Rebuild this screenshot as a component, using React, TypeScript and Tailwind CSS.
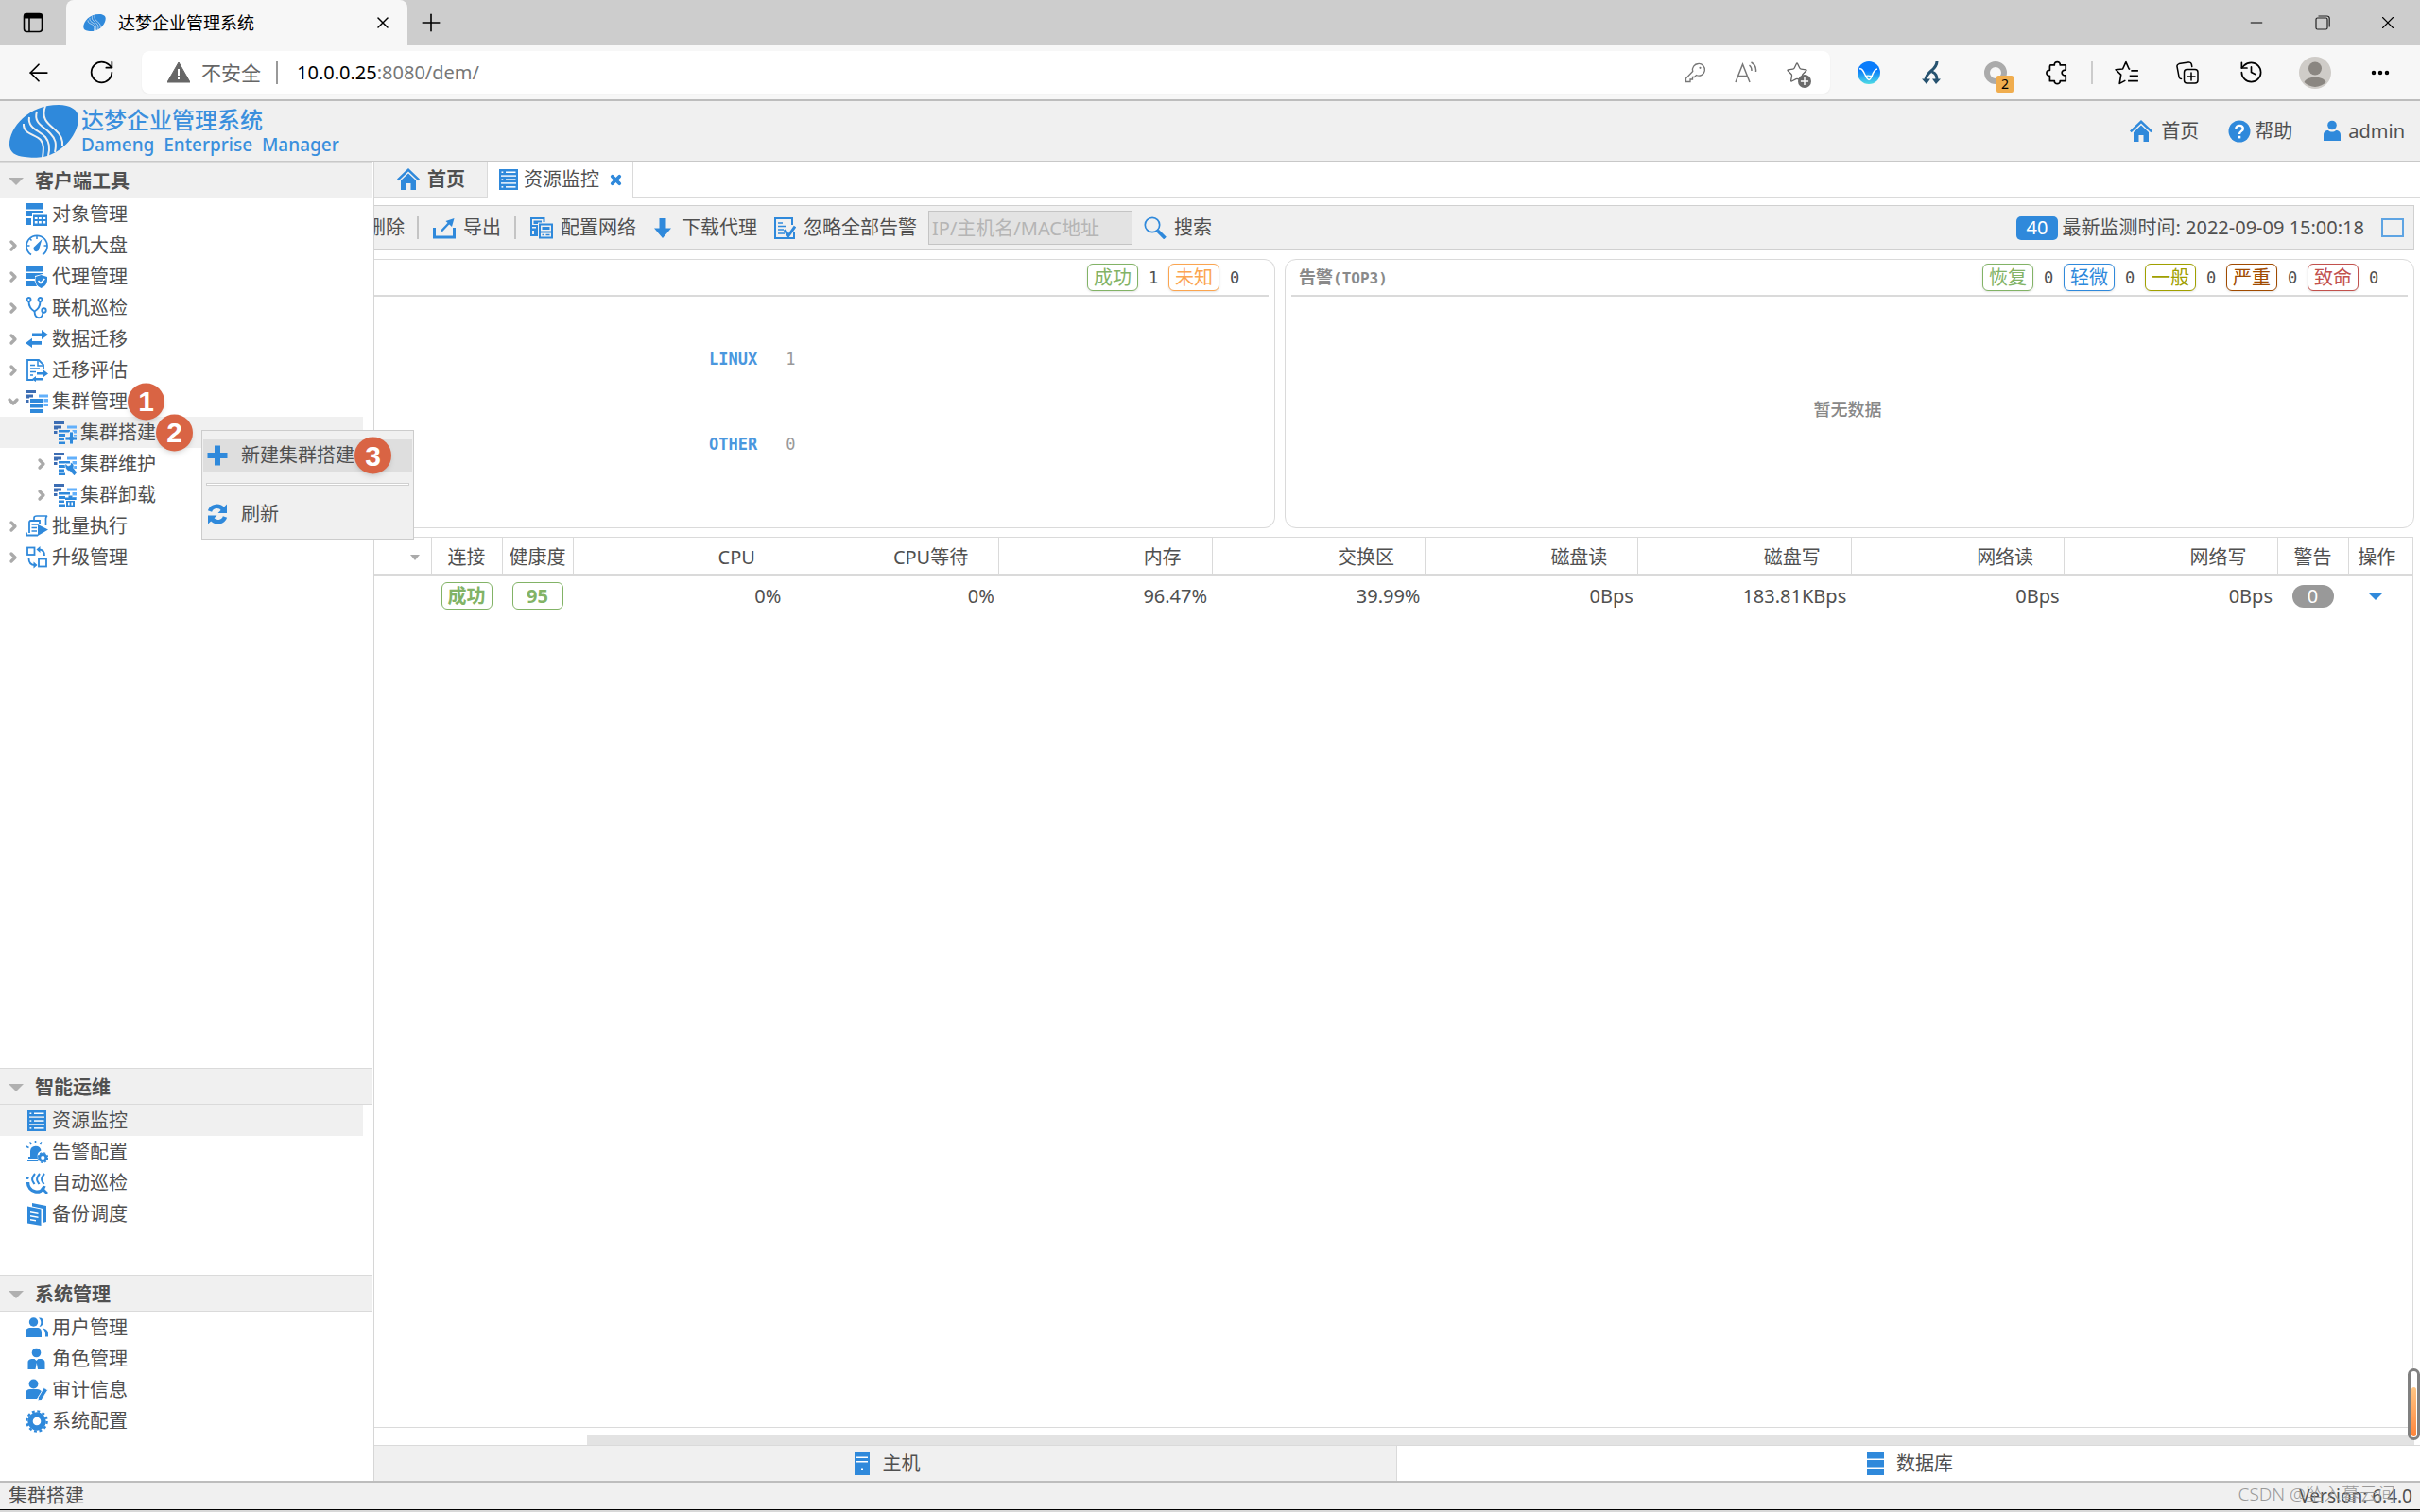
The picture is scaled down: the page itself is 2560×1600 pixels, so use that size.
import { useState } from 'react';
import type { ReactNode } from 'react';
import { ArrowLeft, RotateCw, X, Plus, Minus, Star, History, Ellipsis, ChevronRight, ChevronDown } from 'lucide-react';
import clsx from 'clsx';

const BLUE = '#2f89db';

/* ---------- icons ---------- */

function Svg({ children, className = 'size-6' }: { children: ReactNode; className?: string }) {
  return (
    <svg viewBox="0 0 24 24" fill={BLUE} className={clsx('shrink-0', className)} aria-hidden="true">
      {children}
    </svg>
  );
}

function Logo({ className, line }: { className: string; line: string }) {
  return (
    <svg viewBox="0 0 73 56" className={clsx('shrink-0', className)} aria-hidden="true">
      <path
        fill={BLUE}
        d="M52 0C64 0 73 5 73 14C73 30 58 50 36 55C30 56 22 56 16 55C6 54 0 50 0 42C0 24 20 0 52 0Z"
      />
      <g fill="none" stroke={line} strokeWidth="2">
        <path d="M15 20C14 31 28 31 33 37C37 42 36 48 35 56" />
        <path d="M21 13C19 25 32 27 38 34C43 40 43 46 41 54" />
        <path d="M29 7C25 20 37 23 43 30C49 36 50 41 48 50" />
        <path d="M38 1C33 15 41 20 48 26C54 31 57 36 56 44" />
      </g>
    </svg>
  );
}

const HomeIcon = () => (
  <Svg>
    <path d="M12 0L24 11.5L22.3 13.2L12 3.4L1.7 13.2L0 11.5Z" />
    <path d="M12 5.5L20 13V23H14.5V16H9.5V23H4V13Z" />
  </Svg>
);

const HelpIcon = () => (
  <Svg>
    <circle cx="12" cy="12" r="11.5" />
    <path
      d="M8.3 9.3C8.3 4.6 15.8 4.8 15.8 9.2C15.8 12 12 11.8 12 15"
      fill="none"
      stroke="#fff"
      strokeWidth="2.4"
    />
    <rect x="10.7" y="16.8" width="2.6" height="2.6" fill="#fff" />
  </Svg>
);

const UserIcon = () => (
  <Svg>
    <circle cx="12" cy="5.5" r="4.8" />
    <path d="M3 22V16C3 12.5 5 11 8 11C10 13 14 13 16 11C19 11 21 12.5 21 16V22Z" />
  </Svg>
);

const ServersIcon = () => (
  <Svg>
    {[1, 8.8, 16.6].map((y) => (
      <g key={y}>
        <rect x="2" y={y} width="20" height="6.4" />
        <rect x="4.5" y={y + 2.5} width="1.8" height="1.5" fill="#fff" />
        <rect x="9" y={y + 2.5} width="10.5" height="1.5" fill="#fff" />
      </g>
    ))}
    <path d="M2 7h2v3H2zM20 7h2v3h-2zM2 14.5h2v3H2zM20 14.5h2v3h-2z" />
  </Svg>
);

const ObjectIcon = () => (
  <Svg>
    <path d="M1 0H18V6.5H1zM1 8H18V10H7V14H1zM1 16H6V23H1z" />
    <path
      d="M8 11.5H23V24H8zM9.8 15V17h2.8v-2zM14 15V17h2.8v-2zM18.4 15V17h2.8v-2zM9.8 19V21.5h2.8v-2.500zM14 19V21.5h2.8v-2.500zM18.4 19V21.5h2.8v-2.500z"
      fillRule="evenodd"
    />
  </Svg>
);

const GaugeIcon = () => (
  <Svg>
    <path d="M6 21.5A11 11 0 1 1 18 21.5" fill="none" stroke={BLUE} strokeWidth="1.7" />
    <path d="M12 1.5V5M1 12H4.5M19.5 12H23M4.5 4.5L6.5 6.5" stroke={BLUE} strokeWidth="1.5" />
    <path d="M17.5 5L14.5 15A3 3 0 1 1 10 12.6Z" />
  </Svg>
);

const AgentIcon = () => (
  <Svg>
    <path d="M1 0H18V6.5H1zM1 8H18V9L10 11V14H1zM1 16H9.5L12 22H1z" />
    <path d="M16.5 10L23 12V15C23 19.5 20 22.5 16.5 24C13 22.5 10.5 19.5 10.5 15V12Z" />
    <path d="M13.5 16L16 18.5L20.3 14" fill="none" stroke="#fff" strokeWidth="1.6" />
  </Svg>
);

const StethoscopeIcon = () => (
  <Svg>
    <g fill="none" stroke={BLUE} strokeWidth="1.9">
      <circle cx="3.5" cy="3" r="2" />
      <circle cx="15.5" cy="3" r="2" />
      <path d="M3.5 5C3.5 10 6 13.5 9.5 15.5C13 13.5 15.5 10 15.5 5" />
      <path d="M9.5 15.5C10 24 17.5 24.5 18.5 16.5" />
      <circle cx="19.5" cy="14.5" r="2.2" />
    </g>
  </Svg>
);

const TransferIcon = () => (
  <Svg>
    <path d="M7 5.5H17V2L24 7.2L17 12V9H7z" />
    <path d="M17 14H7V10.8L0 16L7 21V17.8H17z" />
  </Svg>
);

const AssessIcon = () => (
  <Svg>
    <path d="M8 22H2V1H14L19 6V11" fill="none" stroke={BLUE} strokeWidth="1.8" />
    <path d="M13 1V7H19" fill="none" stroke={BLUE} strokeWidth="1.5" />
    <path d="M5 6.5H10M5 10H15M5 13.5H11M5 17H8" stroke={BLUE} strokeWidth="1.5" />
    <path d="M12 14H19V11.5L24 15.5L19 19V16.5H12zM18 20H11V18L6.5 21.5L11 24V22.5H18z" />
  </Svg>
);

function ClusterBase({ children }: { children?: ReactNode }) {
  return (
    <Svg>
      <path fill="#3c6db3" d="M0 0H11V3H0zM0 4.500H8V7.500H4V8.500H0zM0 10H3.500V13H0z" />
      <path fill="#62b0fb" d="M14 4.500H24V7.500H14zM19.500 9H24V12.500H19.500zM19.500 14H24V17H19.500z" />
      {children ?? <path d="M5 9H18V13H5zM5 14.500H18V18.500H5zM5 20H18V24H5z" />}
    </Svg>
  );
}

const clusterStub = 'M5 9H17V11.500H5zM5 13H12V16H5zM5 17.500H11V20H5zM5 21.500H12V24H5z';

const ClusterIcon = () => <ClusterBase />;
const ClusterAddIcon = () => (
  <ClusterBase>
    <path d={clusterStub} />
    <path d="M16.5 11H20.500V16H24.5V20H20.500V24H16.5V20H12V16H16.5z" stroke="#fff" strokeWidth="0.8" />
  </ClusterBase>
);
const ClusterToolIcon = () => (
  <ClusterBase>
    <path d={clusterStub} />
    <path
      d="M12 11.5L15 14L17.5 13L17.5 10.5C21 11 21.5 14 20.5 16L24.500 21L21.5 24.500L17 19.500C13.5 19.5 11.5 16 12 11.5Z"
      stroke="#fff"
      strokeWidth="0.6"
    />
  </ClusterBase>
);
const ClusterRemoveIcon = () => (
  <ClusterBase>
    <path d={clusterStub} />
    <path
      d="M12 14.5H15.5V12.5H19.5V14.5H23V17H12zM13 18H22V24H13zM15 19.5V22.5H16.6V19.5zM18.4 19.5V22.5H20V19.5z"
      fillRule="evenodd"
    />
  </ClusterBase>
);

const BatchIcon = () => (
  <Svg>
    <path d="M9 5V3C9 1 10.5 1 12 1H23C21 2 21.5 4 21.5 6V11" fill="none" stroke={BLUE} strokeWidth="1.7" />
    <path d="M15 9V6H6C3.5 6 4 8 4 10V19M1 18.5V21.5H13" fill="none" stroke={BLUE} strokeWidth="1.8" />
    <path d="M6.5 10H13M6.5 13.5H12M6.5 17H12" stroke={BLUE} strokeWidth="1.5" />
    <path d="M13 10L24 15.5L13 22Z" />
  </Svg>
);

const UpgradeIcon = () => (
  <Svg>
    <g fill="none" stroke={BLUE} strokeWidth="1.8">
      <rect x="2" y="1.5" width="7.5" height="7.5" />
      <rect x="14" y="13.5" width="8" height="8" />
      <path d="M14 3.5C18 3.5 20 6 20 10M10 20C6 20 3.5 17.5 3.5 13" />
    </g>
    <path d="M15.5 0V7L11.5 3.5zM8.5 16.5V23.5L12.5 20z" />
  </Svg>
);

const AlarmIcon = () => (
  <Svg>
    <path d="M5 17V11A5.8 5.8 0 0 1 16.5 10.5C13 12 12 15 13 19H3V17zM2 20.5H13V22H2z" />
    <path d="M10.5 0V3M4.5 1.5L6 4M17 1.5L15.5 4M0.5 6L3.5 7.5" stroke={BLUE} strokeWidth="1.6" />
    <circle cx="18.3" cy="18" r="3.6" fill="none" stroke={BLUE} strokeWidth="3" />
    <circle cx="18.3" cy="18" r="5.3" fill="none" stroke={BLUE} strokeWidth="1.2" strokeDasharray="2.2 2" />
  </Svg>
);

const PatrolIcon = () => (
  <Svg>
    <path d="M2.5 11C2.5 22 17 25 20 15" fill="none" stroke={BLUE} strokeWidth="3.4" />
    <path d="M17 17L23 23" stroke={BLUE} strokeWidth="2.6" />
    <path
      d="M10 2C5 8 7.5 10 9.5 13M15 2C10 8 12.5 10 14.5 13M20 2C15 8 17.5 10 19.5 13"
      fill="none"
      stroke={BLUE}
      strokeWidth="2"
    />
    <circle cx="2" cy="6.5" r="1.6" />
  </Svg>
);

const BackupIcon = () => (
  <Svg>
    <path d="M7 0L22 3V20L18.5 21V6L7 3.5z" />
    <path
      d="M2 3.5L16.5 6.5V24L2 21.5zM5 9V10.500L13.5 12.1V10.6zM5 13V14.500L13.5 16.1V14.6zM5 17V18.500L11 19.500V18z"
      fillRule="evenodd"
    />
  </Svg>
);

const UsersIcon = () => (
  <Svg>
    <circle cx="8.5" cy="6" r="4.7" />
    <path d="M0 22V17C0 13.5 2 12 5.5 12H12C15.5 12 17 14 17 17V22zM14 1.5C20.5 0.5 20.5 10 14.5 11C17 8 17 4.5 14 1.5zM18 12.5C22 13 24 15 24 19V21.5H21C21.5 17.5 20.5 14.5 18 12.5z" />
  </Svg>
);

const RoleIcon = () => (
  <Svg>
    <circle cx="11.5" cy="5.5" r="4.8" />
    <path d="M2.5 23V16C2.5 13 4.5 12 7.5 12H9.5L11.5 14L13.5 12H15.5C18.5 12 20.5 13 20.5 16V23H13L11.8 16L10.5 23z" />
  </Svg>
);

const AuditIcon = () => (
  <Svg>
    <circle cx="8.5" cy="5.5" r="4.9" />
    <path d="M0 21V15.5C0 12.5 2 11 5 11H12C15 11 16.5 12.5 17 13.5L12 21z" />
    <path d="M19.5 9.5L23.5 12L16.5 23L13 24L13.5 19.5z" stroke="#fff" strokeWidth="0.8" />
  </Svg>
);

const GearIcon = () => (
  <Svg>
    <circle cx="12" cy="12" r="7" fill="none" stroke={BLUE} strokeWidth="5.4" />
    <circle cx="12" cy="12" r="10.6" fill="none" stroke={BLUE} strokeWidth="2.4" strokeDasharray="2.9 2.65" />
  </Svg>
);

const ExportIcon = () => (
  <Svg>
    <path d="M0 12H3V20.5H21V12H24V23.5H0z" />
    <path d="M9 15.5L17 7" stroke={BLUE} strokeWidth="2.4" />
    <path d="M13.5 5L22.5 2L20 11z" />
  </Svg>
);

const NetworkIcon = () => (
  <Svg>
    <path fillRule="evenodd" d="M0 1H15.5V6H13.5V3H2V9H8V21H0zM2 11V12.5H6V11zM2 15V19H4V15z" />
    <path fillRule="evenodd" d="M9 7.5H24V23.5H9zM11 9.500V15.500H22V9.500zM11 17.5V21.5H22V17.5z" />
    <path d="M3.5 4.5H12V6.5H8V8H3.5zM12.500 11H20.500V14H12.500zM12.5 18.8H14.5V20.3H12.5zM16.5 18.8H20.5V20.3H16.5z" />
  </Svg>
);

const DownIcon = () => (
  <Svg>
    <path d="M8.5 2H15.5V12.5H21L12 23L3 12.5H8.5z" />
  </Svg>
);

const IgnoreIcon = () => (
  <Svg>
    <path d="M20 9V2H2V23H22V17" fill="none" stroke={BLUE} strokeWidth="2" />
    <path d="M5 7H10M5 10.5H14M5 14H11M5 18H12" stroke={BLUE} strokeWidth="1.7" />
    <path d="M12 14L16 20.5L23 10.5" fill="none" stroke={BLUE} strokeWidth="3" />
  </Svg>
);

const SearchIcon = () => (
  <Svg>
    <circle cx="9" cy="9" r="7.7" fill="none" stroke={BLUE} strokeWidth="1.7" />
    <path d="M14.5 15L22.5 23" stroke={BLUE} strokeWidth="3.8" />
  </Svg>
);

const RefreshIcon = () => (
  <Svg>
    <path d="M4 9C6 3 14 2 18 7" fill="none" stroke={BLUE} strokeWidth="4.5" />
    <path d="M22 1.500V11H12.5zM2 22.500V13.5H11.5z" />
    <path d="M20 15C18 21 10 22 6 17" fill="none" stroke={BLUE} strokeWidth="4.5" />
  </Svg>
);

const AddIcon = () => (
  <Svg>
    <path d="M9 1.5H15V9H22.5V15H15V22.5H9V15H1.5V9H9z" />
  </Svg>
);

const HostIcon = () => (
  <Svg>
    <path d="M4 0H20V24H4z" />
    <path d="M6 4.500H18V6H6zM6 9H18V10.500H6zM11 16.500H13V19H11z" fill="#fff" />
  </Svg>
);

const DatabaseIcon = () => (
  <Svg>
    <path d="M3 0H21V6.5H3zM3 8H21V15.5H3zM3 17H21V24H3z" />
  </Svg>
);

/* ---------- browser chrome ---------- */

const iconButton = 'flex h-9 shrink-0 items-center justify-center';

function BrowserTabs() {
  return (
    <div className="flex h-12 items-stretch bg-[#cdcdcd] text-black">
      <button aria-label="标签页操作" className="flex w-[70px] items-center justify-center">
        <svg viewBox="0 0 24 24" className="size-6" fill="none" stroke="#000" strokeWidth="1.6">
          <rect x="2.5" y="2.5" width="19" height="19" rx="3" />
          <path d="M2.5 5H21.5" strokeWidth="5" />
          <path d="M8 6V21" />
        </svg>
      </button>
      <div className="flex w-[361px] items-center rounded-t-lg bg-[#f7f7f7] pr-4 pl-[18px]">
        <Logo className="h-[18px] w-6" line="#f7f7f7" />
        <span className="ml-[13px] flex-1 text-lg">达梦企业管理系统</span>
        <button aria-label="关闭标签页">
          <X className="size-5" strokeWidth={1.8} />
        </button>
      </div>
      <button aria-label="新建标签页" className="ml-2.5 flex items-center">
        <Plus className="size-[30px]" strokeWidth={1.3} />
      </button>
      <div className="ml-auto flex items-center">
        <button aria-label="最小化" className="flex w-[70px] justify-center">
          <Minus className="size-5" strokeWidth={1.2} />
        </button>
        <button aria-label="还原" className="flex w-[70px] justify-center">
          <svg viewBox="0 0 16 16" className="size-4" fill="none" stroke="#222" strokeWidth="1.2">
            <rect x="1" y="3" width="12" height="12" rx="1.5" />
            <path d="M3.5 1H12.500C14.500 1 15.200 2 15.200 3.500V12.500" />
          </svg>
        </button>
        <button aria-label="关闭" className="flex w-[68px] justify-center">
          <X className="size-[22px]" strokeWidth={1.2} />
        </button>
      </div>
    </div>
  );
}

function AddressBar() {
  return (
    <div className="flex h-[59px] items-center border-b-2 border-[#bdbdbd] bg-[#f7f7f7] text-black">
      <button aria-label="返回" className={clsx(iconButton, 'ml-[26px] w-[30px]')}>
        <ArrowLeft className="size-8" strokeWidth={1.4} />
      </button>
      <button aria-label="刷新页面" className={clsx(iconButton, 'ml-9 w-[30px]')}>
        <RotateCw className="size-[29px]" strokeWidth={1.4} />
      </button>
      <div className="ml-7 flex h-[45px] flex-1 items-center rounded-lg bg-white pr-2 pl-[27px] text-[#666] shadow-xs">
        <svg viewBox="0 0 24 24" className="size-6" aria-hidden="true">
          <path d="M12 1L24 22H0Z" fill="#666" stroke="#666" strokeLinejoin="round" />
          <path d="M12 8V15M12 17V19" stroke="#fff" strokeWidth="2" />
        </svg>
        <span className="ml-3 text-[21px]">不安全</span>
        <span className="mr-5 ml-4 h-6 w-0.5 bg-[#999]" />
        <label className="flex flex-1 text-[#777]">
          <span className="text-black">10.0.0.25</span>
          <input aria-label="地址" defaultValue=":8080/dem/" className="min-w-0 flex-1 focus:outline-none" />
        </label>
        <button aria-label="密码" className={clsx(iconButton, 'w-[54px]')}>
          <svg viewBox="0 0 24 24" className="size-6" fill="none" stroke="#777" strokeWidth="1.3">
            <path d="M15.5 2.5A6.3 6.3 0 1 1 13.5 14.5L11.5 16.5H9.5V19H7V21.5H2.5V18L9.7 10.5A6.3 6.3 0 0 1 15.5 2.5Z" />
            <circle cx="17.5" cy="6.8" r="1.1" fill="#777" stroke="none" />
          </svg>
        </button>
        <button aria-label="大声朗读" className={clsx(iconButton, 'w-[54px]')}>
          <svg viewBox="0 0 24 24" className="size-6" fill="none" stroke="#777" strokeWidth="1.5">
            <path d="M1 22L8.5 3L16 22M3.8 15.5H13.2M15.5 4C17.5 5.5 18 7.5 18 10M17.5 1C21 3 23 7 22.5 11" />
          </svg>
        </button>
        <button aria-label="添加到收藏夹" className={clsx(iconButton, 'relative w-[54px]')}>
          <Star className="size-6" strokeWidth={1.3} />
          <svg viewBox="0 0 24 24" className="absolute right-3 bottom-0.5 size-[14px]">
            <circle cx="12" cy="12" r="12" fill="#6b6b6b" />
            <path d="M12 5V19M5 12H19" stroke="#fff" strokeWidth="2.5" />
          </svg>
        </button>
      </div>

      <div className="flex items-center pl-2">
        <button aria-label="扩展一" className={clsx(iconButton, 'w-[66px]')}>
          <svg viewBox="0 0 24 24" className="size-6">
            <defs>
              <linearGradient id="ext" x1="0" y1="0" x2="0" y2="1">
                <stop offset="0.4" stopColor="#0a7cfb" />
                <stop offset="1" stopColor="#4fdce4" />
              </linearGradient>
            </defs>
            <circle cx="12" cy="12" r="12" fill="url(#ext)" />
            <path
              d="M2 8C7 6 8 19 12 19.5C16 19 15 9 21 8M8 16C11 14 13 16 16 15.5"
              fill="none"
              stroke="#fff"
              strokeWidth="1.4"
            />
          </svg>
        </button>
        <button aria-label="扩展二" className={clsx(iconButton, 'w-[66px]')}>
          <svg viewBox="0 0 24 24" className="size-6" fill="none" stroke="#26526f" strokeWidth="3">
            <path d="M18 0C18 10 6 10 6 20M13 11C17 13 18 15 18 20" />
            <path d="M2 18.5H11L7 24zM13 18.5H22L17 24z" fill="#26526f" stroke="none" />
          </svg>
        </button>
        <button aria-label="扩展三" className={clsx(iconButton, 'relative w-[70px]')}>
          <svg viewBox="0 0 24 24" className="size-6">
            <circle cx="12" cy="12" r="9" fill="none" stroke="#ababab" strokeWidth="6" />
          </svg>
          <span className="absolute top-[21px] left-9 flex size-[18px] items-center justify-center rounded-xs bg-[#f0ad4e] text-sm text-black">
            2
          </span>
        </button>
        <button aria-label="扩展" className={clsx(iconButton, 'w-[60px]')}>
          <svg viewBox="0 0 24 24" className="size-[26px]" fill="none" stroke="#000" strokeWidth="1.6" strokeLinejoin="round">
            <path d="M6 4.500H9.500C9 0.500 15.500 0.500 15 4.500H20.500V9.300C15.500 8.800 15.500 15.200 20.500 14.700V20H15C15.500 23.500 9 23.500 9.500 20H5V15C0.700 15.500 0.700 9 5 9.500V6Q5 4.500 6 4.500Z" />
          </svg>
        </button>
        <span className="mx-1.5 h-6 w-0.5 bg-[#ccc]" />
        <button aria-label="收藏夹" className={clsx(iconButton, 'w-[60px]')}>
          <svg
            viewBox="0 0 24 24"
            className="size-[26px]"
            fill="none"
            stroke="#000"
            strokeWidth="1.5"
            strokeLinejoin="round"
          >
            <path d="M15 8.5L14 8.3L11 1.5L7.9 8.3L1 9L6.2 14L4.8 22.5L10.5 19.5M16 10H23M14.5 15H23M13 20H23" />
          </svg>
        </button>
        <button aria-label="集锦" className={clsx(iconButton, 'w-[68px]')}>
          <svg
            viewBox="0 0 24 24"
            className="size-6"
            fill="none"
            stroke="#000"
            strokeWidth="1.5"
            strokeLinecap="round"
          >
            <rect x="8.5" y="8.5" width="14.5" height="14.5" rx="3" />
            <path d="M16 12V20M12 16H20M5.5 18.5C4 18.5 3.2 17.5 3 16L1 5.5C0.7 4 1.7 3 3 2.6L13 1C15 0.7 16 1.5 16.3 3L16.8 5.5" />
          </svg>
        </button>
        <button aria-label="历史记录" className={clsx(iconButton, 'w-[66px]')}>
          <History className="size-[27px]" strokeWidth={1.5} />
        </button>
        <button aria-label="个人资料" className={clsx(iconButton, 'w-[70px]')}>
          <svg viewBox="0 0 34 34" className="size-[34px]">
            <circle cx="17" cy="17" r="17" fill="#cfccc8" />
            <circle cx="17" cy="12.5" r="7" fill="#8a8681" />
            <path d="M5.5 27C8 20 26 20 28.5 27A16 16 0 0 1 5.5 27Z" fill="#8a8681" />
          </svg>
        </button>
        <button aria-label="设置及其他" className={clsx(iconButton, 'mr-2 w-[68px]')}>
          <Ellipsis className="size-6" strokeWidth={2.5} />
        </button>
      </div>
    </div>
  );
}

/* ---------- sidebar ---------- */

type TreeNode = {
  label: string;
  icon: () => ReactNode;
  arrow?: 'right' | 'down';
  level?: number;
  step?: number;
  menu?: boolean;
};

const clientTools: TreeNode[] = [
  { label: '对象管理', icon: ObjectIcon },
  { label: '联机大盘', icon: GaugeIcon, arrow: 'right' },
  { label: '代理管理', icon: AgentIcon, arrow: 'right' },
  { label: '联机巡检', icon: StethoscopeIcon, arrow: 'right' },
  { label: '数据迁移', icon: TransferIcon, arrow: 'right' },
  { label: '迁移评估', icon: AssessIcon, arrow: 'right' },
  { label: '集群管理', icon: ClusterIcon, arrow: 'down', step: 1 },
  { label: '集群搭建', icon: ClusterAddIcon, level: 1, step: 2, menu: true },
  { label: '集群维护', icon: ClusterToolIcon, arrow: 'right', level: 1 },
  { label: '集群卸载', icon: ClusterRemoveIcon, arrow: 'right', level: 1 },
  { label: '批量执行', icon: BatchIcon, arrow: 'right' },
  { label: '升级管理', icon: UpgradeIcon, arrow: 'right' },
];

const smartOps: TreeNode[] = [
  { label: '资源监控', icon: ServersIcon },
  { label: '告警配置', icon: AlarmIcon },
  { label: '自动巡检', icon: PatrolIcon },
  { label: '备份调度', icon: BackupIcon },
];

const systemAdmin: TreeNode[] = [
  { label: '用户管理', icon: UsersIcon },
  { label: '角色管理', icon: RoleIcon },
  { label: '审计信息', icon: AuditIcon },
  { label: '系统配置', icon: GearIcon },
];

function StepBadge({ n }: { n: number }) {
  return (
    <span className="absolute top-1/2 left-full z-20 flex size-[39px] -translate-y-1/2 items-center justify-center rounded-full bg-[#d96444] font-['Liberation_Sans'] text-[30px] leading-none font-bold text-white shadow-md">
      {n}
    </span>
  );
}

function ContextMenu() {
  return (
    <div
      role="menu"
      className="absolute top-3.5 left-[213px] z-10 w-[225px] border border-[#ccc] bg-[#f0f0f0] px-px pt-[9px] pb-2"
    >
      <button role="menuitem" className="flex h-[34px] w-full items-center bg-[#dedede] pl-[3px]">
        <AddIcon />
        <span className="relative ml-[13px]">
          新建集群搭建
          <StepBadge n={3} />
        </span>
      </button>
      <div className="mx-[3px] my-3 h-[3px] border border-[#d0d0d0] bg-white" />
      <button role="menuitem" className="flex h-9 w-full items-center pl-[3px]">
        <RefreshIcon />
        <span className="ml-[13px]">刷新</span>
      </button>
    </div>
  );
}

function Tree({ nodes, active }: { nodes: TreeNode[]; active?: string }) {
  const [current, setCurrent] = useState(active);
  return (
    <ul className="mr-[9px]">
      {nodes.map((node) => (
        <li key={node.label} className="relative">
          <button
            onClick={() => setCurrent(node.label)}
            className={clsx(
              'flex h-[33px] w-full items-center',
              node.level ? 'pl-[36px]' : 'pl-1.5',
              current === node.label && 'bg-[#f0f0f0]',
            )}
          >
            <span className="mr-1 w-[17px] text-[#aaa]">
              {node.arrow === 'right' && <ChevronRight className="size-4" strokeWidth={5} />}
              {node.arrow === 'down' && <ChevronDown className="size-4" strokeWidth={5} />}
            </span>
            <node.icon />
            <span className="relative ml-1">
              {node.label}
              {node.step && <StepBadge n={node.step} />}
            </span>
          </button>
          {node.menu && <ContextMenu />}
        </li>
      ))}
    </ul>
  );
}

type SectionProps = { title: string; nodes: TreeNode[]; active?: string; className?: string };

function Section({ title, nodes, active, className }: SectionProps) {
  return (
    <section className={className}>
      <h2>
        <button className="flex h-[39px] w-full items-center border-y border-[#dadada] bg-[#f0f0f0] pt-0.5 pl-[9px] font-bold">
          <svg viewBox="0 0 16 8" className="mr-3 h-2 w-4">
            <path d="M0 0H16L8 8z" fill="#b0b0b0" />
          </svg>
          {title}
        </button>
      </h2>
      <Tree nodes={nodes} active={active} />
    </section>
  );
}

/* ---------- main area ---------- */

function PageTabs() {
  return (
    <div className="flex h-[38px] border-b border-[#dadada]">
      <button className="flex items-center gap-2 border-r border-[#dadada] bg-[#f0f0f0] pr-[23px] pl-6 font-bold">
        <HomeIcon />
        首页
      </button>
      <div className="-mb-px flex items-center border-r border-[#dadada] bg-white pr-2.5 pl-2.5">
        <ServersIcon />
        <span className="mr-2.5 ml-1">资源监控</span>
        <button aria-label="关闭资源监控">
          <X className="size-[15px] text-[#2f89db]" strokeWidth={6} />
        </button>
      </div>
    </div>
  );
}

function Toolbar() {
  const [keyword, setKeyword] = useState('');
  return (
    <div className="mt-2 mr-1.5 flex h-12 items-center border border-l-0 border-[#d0d0d0] bg-[#f0f0f0] pr-2.5">
      <div className="flex w-8 justify-end overflow-hidden">
        <button className="whitespace-nowrap">删除</button>
      </div>
      <span className="ml-[13px] h-6 w-0.5 bg-[#c4c4c4]" />
      <button className="ml-[15px] flex items-center gap-2">
        <ExportIcon />
        导出
      </button>
      <span className="ml-3.5 h-6 w-0.5 bg-[#c4c4c4]" />
      <button className="ml-[15px] flex items-center gap-2">
        <NetworkIcon />
        配置网络
      </button>
      <button className="ml-4 flex items-center gap-2">
        <DownIcon />
        下载代理
      </button>
      <button className="ml-[17px] flex items-center gap-2">
        <IgnoreIcon />
        忽略全部告警
      </button>
      <input
        aria-label="IP/主机名/MAC地址"
        value={keyword}
        onChange={(e) => setKeyword(e.target.value)}
        placeholder="IP/主机名/MAC地址"
        className="ml-3 h-9 w-[216px] border border-[#c4c4c4] bg-[#e3e3e3] px-[3px] placeholder:text-[#b5b5b5]"
      />
      <button className="ml-3 flex items-center gap-2">
        <SearchIcon />
        搜索
      </button>
      <div className="ml-auto flex items-center">
        <span className="flex h-[25px] items-center rounded-[5px] bg-[#2f89db] px-[11px] text-white">40</span>
        <span className="mr-[18px] ml-1">最新监测时间: 2022-09-09 15:00:18</span>
        <button aria-label="最大化" className="h-5 w-6 border-2 border-[#5ea4e3]" />
      </div>
    </div>
  );
}

const tagBase = 'flex h-[29px] w-[54px] items-center justify-center rounded-md border bg-white';

const hostTags = [
  { label: '成功', value: 1, tone: 'border-[#82b366] text-[#82b366]' },
  { label: '未知', value: 0, tone: 'border-[#fba550] text-[#fba550]' },
];

const alertTags = [
  { label: '恢复', value: 0, tone: 'border-[#82b366] text-[#82b366]' },
  { label: '轻微', value: 0, tone: 'border-[#2f89db] text-[#2f89db]' },
  { label: '一般', value: 0, tone: 'border-[#a0a000] text-[#a0a000]' },
  { label: '严重', value: 0, tone: 'border-[#a04a00] text-[#a04a00]' },
  { label: '致命', value: 0, tone: 'border-[#c2514d] text-[#c2514d]' },
];

function Tags({ items }: { items: typeof hostTags }) {
  return (
    <div className="ml-auto flex pr-5">
      {items.map((t) => (
        <div key={t.label} className="flex items-center">
          <span className={clsx(tagBase, 'shadow-sm', t.tone)}>{t.label}</span>
          <span className="w-8 text-center font-['DejaVu_Sans_Mono'] text-[17px]">{t.value}</span>
        </div>
      ))}
    </div>
  );
}

const osCounts = [
  { name: 'LINUX', count: 1 },
  { name: 'OTHER', count: 0 },
];

function Summary() {
  return (
    <div className="mt-[9px] mr-1.5 flex h-[285px] gap-2.5">
      <div className="flex w-[953px] flex-col rounded-r-xl border border-l-0 border-[#dadada]">
        <div className="mr-1.5 flex h-[39px] items-center border-b-2 border-[#dadada]">
          <Tags items={hostTags} />
        </div>
        <dl className="flex flex-1 flex-col gap-[66px] pt-[54px] pl-[354px] font-['DejaVu_Sans_Mono'] text-[17px] leading-6">
          {osCounts.map((os) => (
            <div key={os.name} className="flex gap-[30px]">
              <dt className="font-bold text-[#4a97de]">{os.name}</dt>
              <dd className="text-[#999]">{os.count}</dd>
            </div>
          ))}
        </dl>
      </div>
      <div className="flex flex-1 flex-col rounded-xl border border-[#dadada]">
        <div className="mx-1.5 flex h-[39px] items-center border-b-2 border-[#dadada] pl-2">
          <h3 className="font-['DejaVu_Sans_Mono','Noto_Sans_CJK_SC',monospace] text-base font-bold text-[#8a8a8a]">
            <span className="text-lg">告警</span>(TOP3)
          </h3>
          <Tags items={alertTags} />
        </div>
        <p className="flex flex-1 items-center justify-center pr-1 pb-1.5 text-lg font-medium text-[#888]">暂无数据</p>
      </div>
    </div>
  );
}

const metrics = [
  { head: 'CPU', value: '0%' },
  { head: 'CPU等待', value: '0%' },
  { head: '内存', value: '96.47%' },
  { head: '交换区', value: '39.99%' },
  { head: '磁盘读', value: '0Bps' },
  { head: '磁盘写', value: '183.81KBps' },
  { head: '网络读', value: '0Bps' },
  { head: '网络写', value: '0Bps' },
];

function HostTable() {
  return (
    <div className="mt-[9px] mr-[7px] flex-1 border-y border-r border-[#dadada]">
      <table className="w-full table-fixed border-collapse">
        <colgroup>
          <col className="w-[60px]" />
          <col className="w-[75px]" />
          <col className="w-[75px]" />
          {metrics.map((m) => (
            <col key={m.head} />
          ))}
          <col className="w-[75px]" />
          <col className="w-[68px]" />
        </colgroup>
        <thead>
          <tr className="h-[39px] border-b-2 border-[#dadada] [&>th]:pt-1 [&>th]:font-normal [&>th]:whitespace-nowrap [&>th:not(:last-child)]:border-r [&>th:not(:last-child)]:border-[#dadada]">
            <th aria-label="排序">
              <svg viewBox="0 0 10 6" className="mr-3 ml-auto h-1.5 w-2.5">
                <path d="M0 0H10L5 6z" fill="#aaa" />
              </svg>
            </th>
            <th>连接</th>
            <th>健康度</th>
            {metrics.map((m) => (
              <th key={m.head} className="pr-8 text-right">
                {m.head}
              </th>
            ))}
            <th>警告</th>
            <th className="pr-2">操作</th>
          </tr>
        </thead>
        <tbody>
          <tr className="h-11">
            <td />
            <td>
              <span className={clsx(tagBase, 'mx-auto border-[#82b366] font-bold text-[#82b366]')}>成功</span>
            </td>
            <td>
              <span className={clsx(tagBase, 'mx-auto border-[#82b366] font-bold text-[#82b366]')}>95</span>
            </td>
            {metrics.map((m) => (
              <td key={m.head} className="pr-[5px] text-right">
                {m.value}
              </td>
            ))}
            <td>
              <span className="mx-auto flex h-6 w-11 items-center justify-center rounded-full bg-[#999] text-white">
                0
              </span>
            </td>
            <td>
              <button aria-label="展开操作" className="mx-auto flex items-center justify-center pr-2.5">
                <svg viewBox="0 0 16 8" className="h-2 w-4">
                  <path d="M0 0H16L8 8z" fill={BLUE} />
                </svg>
              </button>
            </td>
          </tr>
        </tbody>
      </table>
    </div>
  );
}

export default function App() {
  return (
    <div className="relative flex min-h-screen flex-col overflow-hidden bg-white font-['Noto_Sans','Noto_Sans_CJK_SC',sans-serif] text-xl leading-7 text-[#505050]">
      <BrowserTabs />
      <AddressBar />

      <header className="flex h-16 items-center border-b border-[#c8c8c8] bg-[#f0f0f0] pr-4 pl-2.5">
        <Logo className="h-14 w-[73px]" line="#f0f0f0" />
        <h1 className="ml-[3px] font-medium text-[#3a8fdd]">
          <span className="block text-2xl leading-7">达梦企业管理系统</span>
          <span className="block text-[19px] leading-6 whitespace-pre">Dameng  Enterprise  Manager</span>
        </h1>
        <nav className="ml-auto flex items-center">
          <a href="#home" className="flex items-center gap-[9px]">
            <HomeIcon />
            首页
          </a>
          <a href="#help" className="ml-[31px] flex items-center gap-1">
            <HelpIcon />
            帮助
          </a>
          <a href="#admin" className="ml-[30px] flex items-center gap-[5px]">
            <UserIcon />
            admin
          </a>
        </nav>
      </header>

      <div className="flex flex-1">
        <aside className="z-10 flex w-[393px] shrink-0 flex-col">
          <Section title="客户端工具" nodes={clientTools} active="集群搭建" className="flex-1" />
          <Section title="智能运维" nodes={smartOps} active="资源监控" className="pb-12" />
          <Section title="系统管理" nodes={systemAdmin} className="pb-[47px]" />
        </aside>

        <main className="relative ml-0.5 flex min-w-0 flex-1 flex-col border-l border-[#d6d6d6]">
          <PageTabs />
          <Toolbar />
          <Summary />
          <HostTable />
          <div className="mt-2 mr-1.5 h-2.5 pl-[225px]">
            <div className="h-full bg-[#e3e3e3]" />
          </div>
          <div className="grid h-[38px] grid-cols-2 border-t border-[#dadada]">
            <button className="flex items-center justify-center gap-2.5 border-r border-[#dadada] bg-[#f0f0f0]">
              <HostIcon />
              主机
            </button>
            <button className="flex items-center justify-center gap-2.5 bg-white">
              <DatabaseIcon />
              数据库
            </button>
          </div>
          <div className="absolute right-0 bottom-[43px] flex h-[76px] w-[13px] items-end rounded-full border-3 border-[#808080] bg-white p-px">
            <div className="h-[52px] w-full rounded-full bg-linear-to-b from-[#ffc684] to-[#ff8438]" />
          </div>
        </main>
      </div>

      <footer className="border-b-2 border-[#d8d8d8]">
        <div className="relative flex h-[31px] items-center border-t-2 border-b border-t-[#bdbdbd] border-b-black bg-[#f0f0f0] pr-2 pl-[9px]">
          <span>集群搭建</span>
          <span className="ml-auto text-[19px]">Version: 6.4.0</span>
          <span className="absolute right-[26px] bottom-0.5 text-[19px] font-light text-[#999]">CSDN @坠入暮云间</span>
        </div>
      </footer>
    </div>
  );
}
